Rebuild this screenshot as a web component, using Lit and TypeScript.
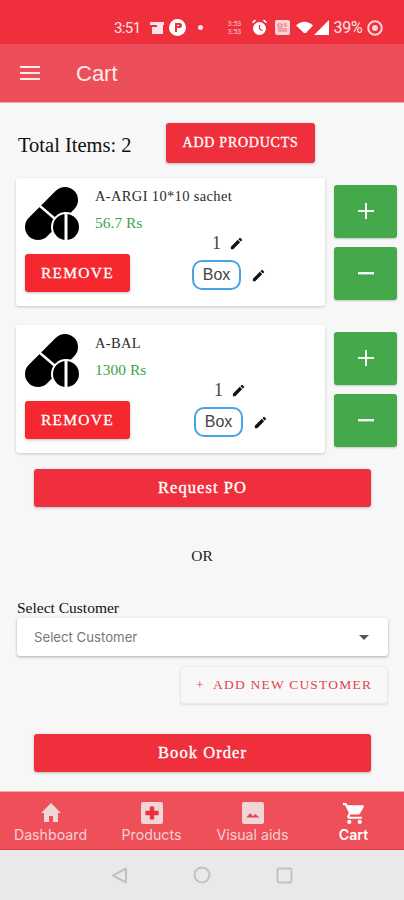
import { LitElement, html, css, svg } from "lit";
import { customElement } from "lit/decorators.js";

const pill = svg`<svg class="pill" viewBox="0 0 54 55" width="54" height="55">
  <path d="M40 14 L13 41" stroke="#000" stroke-width="26" stroke-linecap="round" fill="none"/>
  <path d="M8 14 L36 38" stroke="#fff" stroke-width="2.4" fill="none"/>
  <circle cx="41" cy="41" r="15" fill="#fff"/>
  <circle cx="41" cy="41" r="13" fill="#000"/>
  <rect x="39.5" y="26" width="3" height="30" fill="#fff"/>
</svg>`;

const pencil = svg`<svg class="pen" viewBox="0 0 24 24" width="15" height="15"><path fill="#111" d="M3 17.25V21h3.75L17.81 9.94l-3.75-3.75L3 17.25zM20.71 7.04a1 1 0 0 0 0-1.41l-2.34-2.34a1 1 0 0 0-1.41 0l-1.83 1.83 3.75 3.75 1.83-1.83z"/></svg>`;

const items = [
  { name: "A-ARGI 10*10 sachet", price: "56.7 Rs", dx: 0 },
  { name: "A-BAL", price: "1300 Rs", dx: 2 },
];

@customElement("app-root")
export class AppRoot extends LitElement {
  static styles = css`
    :host { display: block; width: 404px; height: 900px; overflow: hidden; background: #f7f7f7; font-family: "Liberation Serif", serif; position: relative; }
    .status { height: 44px; background: #ef2f3c; display: flex; align-items: center; box-sizing: border-box; padding: 11px 0 0 114px; color: #fde3e5; font: 15px "Roboto", sans-serif; }
    .status svg { display: block; }
    .status .t { letter-spacing: -0.6px; }
    .stack { display: flex; flex-direction: column; align-items: center; width: 18px; margin-left: 23px; color: #fbc9cc; font: 7px/8px "Roboto", sans-serif; white-space: nowrap; }
    .batt { margin-left: 5px; font-size: 16px; letter-spacing: -.2px; }
    .appbar { height: 59px; background: #ec4f59; display: flex; align-items: center; border-bottom: 1px solid #f6a5aa; box-sizing: border-box; color: #fde9ea; }
    .burger { margin-left: 20px; width: 20px; display: flex; flex-direction: column; gap: 4px; }
    .burger i { display: block; height: 2px; background: #fdeaeb; }
    .title { margin-left: 36px; padding-top: 1px; font: 22px "Liberation Sans", sans-serif; }
    .top { display: flex; align-items: center; padding: 20px 0 0 18px; height: 40px; }
    .total { font-size: 20.5px; color: #111; width: 148px; margin-top: 5px; white-space: nowrap; }
    .btn { display: flex; align-items: center; justify-content: center; background: #ef2f3c; color: #fff; border-radius: 3px; box-shadow: 0 1px 3px rgba(0,0,0,.25); box-sizing: border-box; }
    .add { width: 149px; height: 40px; font-size: 14px; letter-spacing: .75px; -webkit-text-stroke: .3px #fff; }
    .row { display: flex; margin: 0 0 19px 16px; gap: 9px; align-items: center; }
    .row.first { margin-top: 15px; }
    .card { width: 309px; height: 128px; background: #fff; border-radius: 3px; box-shadow: 0 1px 3px rgba(0,0,0,.2); display: grid; grid-template-columns: 114px 1fr; grid-template-rows: 68px 1fr; box-sizing: border-box; padding: 8px 0 0 9px; }
    .pill { display: block; }
    .info { margin-left: -44px; }
    .name { font-size: 14.5px; color: #2a2a2a; margin-top: 2px; height: 26px; white-space: nowrap; letter-spacing: .35px; }
    .price { font-size: 15.5px; color: #3da447; }
    .remove { grid-column: 1; width: 105px; height: 38px; background: #f5282f; font-size: 15.5px; letter-spacing: 1.3px; -webkit-text-stroke: .3px #fff; }
    .qty { display: flex; flex-direction: column; align-items: flex-start; margin: -21px 0 0 53px; }
    .q { display: flex; align-items: center; height: 20px; margin-left: 20px; font-size: 18px; color: #444; gap: 8px; }
    .u { display: flex; align-items: center; gap: 10px; margin-top: 7px; }
    .box { width: 49px; height: 30px; box-sizing: border-box; border: 2px solid #46a4e6; border-radius: 10px; display: flex; align-items: center; justify-content: center; font: 16px "Liberation Sans", sans-serif; color: #444; background: #fff; }
    .steps { display: flex; flex-direction: column; gap: 9px; }
    .step { width: 63px; height: 53px; background: #43a94b; border-radius: 3px; color: #fff; display: flex; align-items: center; justify-content: center; box-shadow: 0 1px 2px rgba(0,0,0,.2); }
    .wide { width: 337px; height: 38px; margin-left: 34px; font-size: 16.5px; letter-spacing: 1.05px; -webkit-text-stroke: .35px #fff; }
    .request { margin-top: -3px; }
    .or { text-align: center; font-size: 15.5px; color: #222; margin-top: 40px; height: 18px; line-height: 18px; }
    .label { font-size: 15.5px; color: #111; margin: 34px 0 0 17px; height: 17px; line-height: 17px; white-space: nowrap; }
    .select { width: 371px; height: 38px; margin: 2px 0 0 17px; background: #fff; border-radius: 3px; box-shadow: 0 1px 3px rgba(0,0,0,.3); display: flex; align-items: center; justify-content: space-between; box-sizing: border-box; padding: 0 19px 0 17px; font: 13.2px "Inter", sans-serif; color: #777; }
    .caret { width: 0; height: 0; border: 5px solid transparent; border-top: 5px solid #555; border-bottom: 0; }
    .anew { width: 208px; height: 38px; margin: 10px 0 0 180px; border-radius: 4px; border: 1px solid #eaeaea; box-shadow: 0 1px 2px rgba(0,0,0,.1); box-sizing: border-box; display: flex; align-items: center; justify-content: center; color: #e2434e; font-size: 13.5px; letter-spacing: 1.2px; white-space: nowrap; background: #f8f8f8; }
    .book { margin-top: 30px; }
    .nav { position: absolute; top: 791px; left: 0; width: 404px; height: 59px; background: #ef4f59; border-top: 1px solid #f9a9ad; border-bottom: 1px solid #d93a45; box-sizing: border-box; display: grid; grid-template-columns: 101px 101px 101px 101px; }
    .tab { display: flex; flex-direction: column; align-items: center; color: #f6d0d2; font: 14.2px "Inter", sans-serif; padding-top: 10px; }
    .tab svg { display: block; height: 22px; }
    .tab span { margin-top: 1px; line-height: 19px; white-space: nowrap; }
    .tab.on { color: #fff; font-weight: 600; }
    .sys { position: absolute; top: 850px; left: 0; width: 404px; height: 50px; background: #e9e9e9; display: flex; justify-content: center; align-items: center; gap: 65px; }
  `;

  private card(it: { name: string; price: string; dx: number }) {
    return html`<div class="card">
      ${pill}
      <div class="info">
        <div class="name">${it.name}</div>
        <div class="price">${it.price}</div>
      </div>
      <div class="btn remove">REMOVE</div>
      <div class="qty" style="transform: translateX(${it.dx}px)">
        <div class="q">1 ${pencil}</div>
        <div class="u"><div class="box">Box</div>${pencil}</div>
      </div>
    </div>
    <div class="steps">
      <div class="step"><svg width="16" height="16" viewBox="0 0 16 16"><path d="M7 0h2v7h7v2H9v7H7V9H0V7h7z" fill="#f3fbf3"/></svg></div>
      <div class="step"><svg width="16" height="16" viewBox="0 0 16 16"><path d="M0 7h16v2.400H0z" fill="#f3fbf3"/></svg></div>
    </div>`;
  }

  render() {
    return html`
      <div class="status">
        <span class="t">3:51</span>
        <svg style="margin-left:9px" width="14" height="14" viewBox="0 0 14 14"><path d="M0 1h14v3h-1v9H2V6h5v-2H0z" fill="#fde3e5"/></svg>
        <svg style="margin-left:5px" width="17" height="17" viewBox="0 0 17 17"><circle cx="8.500" cy="8.500" r="8.500" fill="#fff"/><path d="M6 4h2v9H6zM8 4h2.500a2.500 2.500 0 0 1 0 5H8V7h2V6H8z" fill="#ef2f3c"/></svg>
        <svg style="margin-left:12px" width="5" height="5"><circle cx="2.500" cy="2.500" r="2.500" fill="#fde3e5"/></svg>
        <span class="stack"><span>3:53</span><span>3:53</span></span>
        <svg style="margin-left:7px" width="17" height="17" viewBox="0 0 17 17"><circle cx="8.500" cy="9.500" r="6.500" fill="#fff"/><path d="M8.500 6v4l3 1.500" stroke="#ef2f3c" fill="none" stroke-width="1.200"/><path d="M1 3l3-2.400 1 1.200-3 2.400zM16 3l-3-2.400-1 1.200 3 2.400z" fill="#fff"/></svg>
        <svg style="margin-left:7px" width="15" height="15" viewBox="0 0 15 15"><rect width="15" height="15" rx="2" fill="#fbd3d6"/><path d="M3 4h4v3H3zM9 4h3M9 6h3M3 9h9M3 11h9" stroke="#ef6a73" fill="none"/></svg>
        <svg style="margin-left:6px" width="17" height="14" viewBox="0 0 17 14"><path d="M0 4.500Q8.500-3 17 4.500L10 12H8z" fill="#fff"/></svg>
        <svg style="margin-left:1px" width="15" height="15" viewBox="0 0 15 15"><path d="M15 0v15H0z" fill="#fff"/></svg>
        <span class="batt">39%</span>
        <svg style="margin-left:4px" width="16" height="16" viewBox="0 0 16 16"><circle cx="8" cy="8" r="6.800" fill="none" stroke="#fbd3d6" stroke-width="2"/><circle cx="8" cy="8" r="3" fill="#fbd3d6"/></svg>
      </div>
      <div class="appbar"><div class="burger"><i></i><i></i><i></i></div><div class="title">Cart</div></div>
      <div class="top"><div class="total">Total Items: 2</div><div class="btn add">ADD PRODUCTS</div></div>
      <div class="row first">${this.card(items[0])}</div>
      <div class="row">${this.card(items[1])}</div>
      <div class="btn wide request">Request PO</div>
      <div class="or">OR</div>
      <div class="label">Select Customer</div>
      <div class="select"><span>Select Customer</span><span class="caret"></span></div>
      <div class="anew">+&nbsp; ADD NEW CUSTOMER</div>
      <div class="btn wide book">Book Order</div>
      <div class="nav">
        <div class="tab"><svg width="24" height="22" viewBox="0 0 24 22"><path d="M12 1 2 11h3v9h5v-6h4v6h5v-9h3z" fill="#f0d6d7"/></svg><span>Dashboard</span></div>
        <div class="tab"><svg width="22" height="22" viewBox="0 0 20 20"><rect width="20" height="20" rx="2" fill="#f0d6d7"/><path d="M8 4h4v4h4v4h-4v4H8v-4H4V8h4z" fill="#e8333f"/></svg><span>Products</span></div>
        <div class="tab"><svg width="22" height="22" viewBox="0 0 20 20"><rect width="20" height="20" rx="2" fill="#f0d6d7"/><path d="M4 14l3.500-4 2.500 3 2-2 4 3z" fill="#e8434e"/></svg><span>Visual aids</span></div>
        <div class="tab on"><svg width="24" height="22" viewBox="1 1 21 21"><path fill="#fff" d="M7 18a2 2 0 1 0 0 4 2 2 0 0 0 0-4zM1 2v2h2l3.600 7.600-1.350 2.400A2 2 0 0 0 7 17h12v-2H7.400a.25.25 0 0 1-.25-.25l.03-.12L8.100 13h7.450a2 2 0 0 0 1.750-1L20.900 5.500A1 1 0 0 0 20 4H5.200l-.94-2H1zm16 16a2 2 0 1 0 0 4 2 2 0 0 0 0-4z"/></svg><span>Cart</span></div>
      </div>
      <div class="sys">
        <svg width="17" height="17" viewBox="0 0 17 17"><path d="M15 1.500v14L2 8.500z" fill="none" stroke="#c2c2c2" stroke-width="2" stroke-linejoin="round"/></svg>
        <svg width="18" height="18" viewBox="0 0 18 18"><circle cx="9" cy="9" r="7.500" fill="none" stroke="#c2c2c2" stroke-width="2"/></svg>
        <svg width="17" height="17" viewBox="0 0 17 17"><rect x="1.500" y="1.500" width="14" height="14" rx="2" fill="none" stroke="#c2c2c2" stroke-width="2"/></svg>
      </div>
    `;
  }
}
